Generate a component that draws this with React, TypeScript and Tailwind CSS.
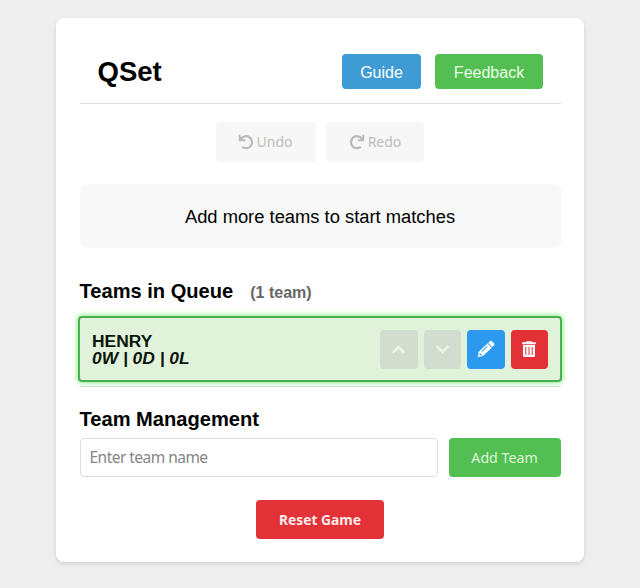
import { useState } from "react";
import { FaChevronUp, FaChevronDown } from "react-icons/fa";

const arial = "font-['Liberation_Sans',Arial,sans-serif]";
const humanist = "font-['Noto_Sans',sans-serif]";

function UndoIcon({ className = "" }: { className?: string }) {
  return (
    <svg viewBox="0 0 16 16" className={`size-4 ${className}`} fill="none">
      <path d="M3 4.9A6 6 0 1 1 4.2 12.8" stroke="currentColor" strokeWidth="2.3" />
      <path d="M0.8 0.8V7.2H7.4V5.4L4.5 5.2L2.6 2.8V0.8Z" fill="currentColor" />
    </svg>
  );
}

function PencilIcon() {
  return (
    <svg viewBox="0 0 18 18" className="size-[18px]" fill="currentColor">
      <path d="M12.8 1.3a1.6 1.6 0 0 1 2.2 0l1.9 1.9a1.6 1.6 0 0 1 0 2.2l-1.7 1.7-4.1-4.1z" />
      <path
        fillRule="evenodd"
        d="M10.5 3.4l4.3 4.3-8.8 8.4-5.2 1 .9-5.3zM10 5.9L4.5 11.3l.6.6 5.5-5.4zM2.8 13.2l-.4 2.3 2.3-.4v-1.2H3.5v-.7z"
      />
    </svg>
  );
}

function TrashIcon() {
  return (
    <svg viewBox="0 0 16 18" className="h-[18px] w-4" fill="currentColor">
      <path d="M5.5 1.2h5l.6 1.1h3.7v1.9H1.2V2.3h3.7z" />
      <path
        fillRule="evenodd"
        d="M2 5h12v10.4a1.7 1.7 0 0 1-1.7 1.7H3.7A1.7 1.7 0 0 1 2 15.4zM4.3 7v8h1V7zM7.5 7v8h1V7zM10.7 7v8h1V7z"
      />
    </svg>
  );
}

function Header() {
  return (
    <header className="flex h-[86px] items-start justify-between border-b border-[#dedede] px-[18px]">
      <h1 className="mt-[38px] text-[27.5px] leading-8 font-bold">QSet</h1>
      <nav className="mt-9 flex gap-3.5 text-[16px] text-white">
        <button className="h-[35px] w-[79px] rounded bg-[#3f9bd3] pt-0.5 pl-px">Guide</button>
        <button className="h-[35px] w-[108px] rounded bg-[#53bf53] pt-0.5 pl-px text-[#eaffe6]">Feedback</button>
      </nav>
    </header>
  );
}

function History() {
  return (
    <div className={`mt-[18px] flex justify-center gap-2.5 text-[14px] text-[#bcbcbc] ${humanist}`}>
      <button className="flex h-10 w-[100px] items-center justify-center gap-[3px] rounded bg-[#f7f7f7] pr-0.5 pb-px">
        <UndoIcon />
        <span>Undo</span>
      </button>
      <button className="flex h-10 w-[98px] items-center justify-center gap-[3px] rounded bg-[#f7f7f7] pb-px">
        <UndoIcon className="-scale-x-100" />
        <span>Redo</span>
      </button>
    </div>
  );
}

function TeamRow() {
  return (
    <div className="-mr-px -ml-[1.5px] flex h-[66px] items-center justify-between rounded border-2 border-[#4caf50] bg-[#e0f3da] px-3 shadow-[0_0_5px_1px_rgba(100,230,100,0.75)]">
      <div className="pt-0.5 text-[17.4px] leading-[17px] font-bold text-[#0a140a]">
        <div>HENRY</div>
        <div className="italic">0W | 0D | 0L</div>
      </div>
      <div className="flex gap-1.5 text-white">
        <button className="flex h-[39px] w-[38px] items-center justify-center rounded bg-[#d2dccf] text-[#edf5ea]">
          <FaChevronUp className="size-[15px]" />
        </button>
        <button className="flex h-[39px] w-[37px] items-center justify-center rounded bg-[#d2dccf] text-[#edf5ea]">
          <FaChevronDown className="size-[15px]" />
        </button>
        <button className="flex h-[39px] w-[38px] items-center justify-center rounded bg-[#2b99ee]">
          <PencilIcon />
        </button>
        <button className="flex h-[39px] w-[37px] items-center justify-center rounded bg-[#e23237]">
          <TrashIcon />
        </button>
      </div>
    </div>
  );
}

export default function App() {
  const [name, setName] = useState("");
  return (
    <div className={`h-[588px] overflow-hidden bg-[#eeeeee] pt-[18px] text-black ${arial}`}>
      <main className="mx-auto h-[544px] w-[528px] rounded-lg bg-white px-[23.5px] shadow-[0_2px_4px_rgba(0,0,0,0.12)]">
        <Header />
        <History />
        <div className="mt-[22px] flex h-16 items-center justify-center rounded-md bg-[#f8f8f8] pt-px text-[18.35px]">
          Add more teams to start matches
        </div>
        <section className="h-[139px] border-b border-[#dedede] pt-[31px]">
          <h2 className="mb-[13px] flex h-6 items-baseline gap-[17px] text-[20.1px] leading-6 font-bold">
            Teams in Queue
            <span className="text-[16px] text-[#666666]">(1 team)</span>
          </h2>
          <TeamRow />
        </section>
        <section className="pt-5">
          <h2 className="text-[20.1px] leading-6 font-bold">Team Management</h2>
          <div className={`mt-[7px] flex gap-[11px] ${humanist}`}>
            <input
              value={name}
              onChange={(e) => setName(e.target.value)}
              placeholder="Enter team name"
              className="h-[39px] min-w-0 flex-1 rounded border border-[#dddddd] px-[9px] pb-0.5 text-[15.5px] tracking-[-0.53px] placeholder:text-[#858585]"
            />
            <button className="h-[39px] w-[112px] rounded bg-[#53bf53] text-[14.2px] text-[#dcf8d8]">
              Add Team
            </button>
          </div>
          <button className={`mx-auto mt-[23px] block h-[39px] w-32 rounded bg-[#e23237] pt-px text-[13.8px] font-bold text-[#ffebe9] ${humanist}`}>
            Reset Game
          </button>
        </section>
      </main>
    </div>
  );
}
